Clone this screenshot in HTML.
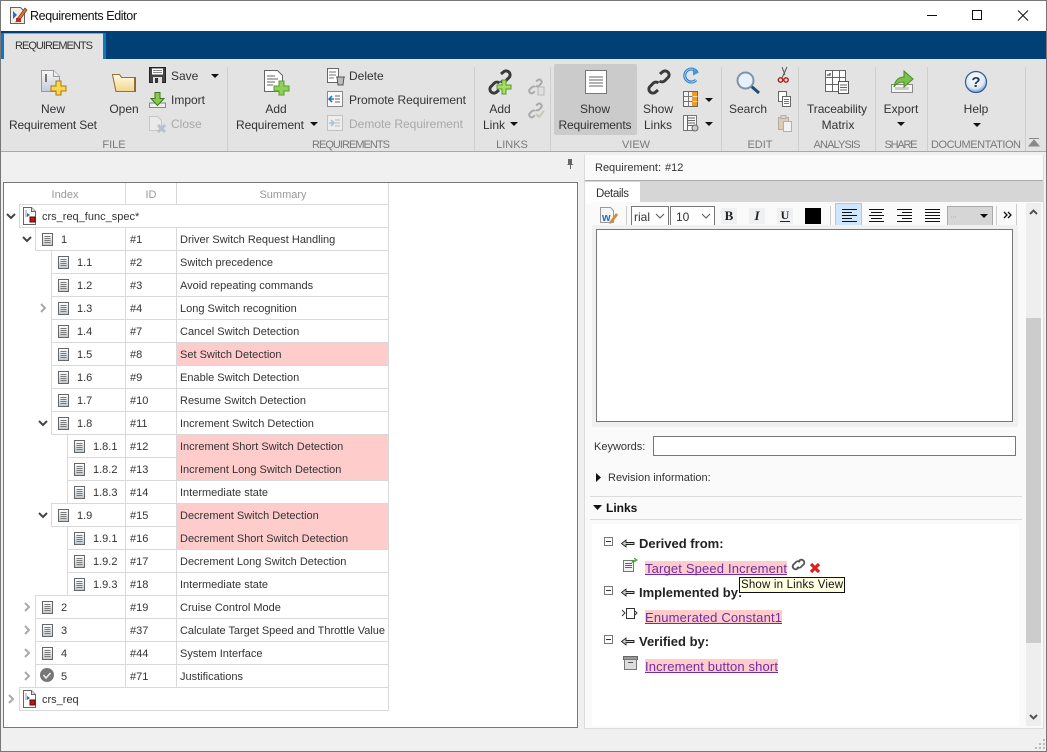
<!DOCTYPE html>
<html><head><meta charset="utf-8"><title>Requirements Editor</title>
<style>
html,body{margin:0;padding:0;width:1047px;height:752px;overflow:hidden;background:#f0f0f0}
svg{display:block}
text{font-family:"Liberation Sans",sans-serif;font-size:11px;fill:#333}
.rb{font-size:12px;fill:#333;text-anchor:middle}
.rl{font-size:12px;fill:#333}
.dis{fill:#a8a8a8}
.sec{font-size:11px;fill:#7a7a7a;text-anchor:middle}
.hd{font-size:11px;fill:#999;text-anchor:middle}
.b{font-size:13px;font-weight:bold;fill:#222}
.lk{font-size:13px;fill:#6f2da8}
.ln{stroke:#d9d9d9;stroke-width:1;fill:none}
.tri{fill:#111}
</style></head><body>
<svg width="1047" height="752" viewBox="0 0 1047 752" xmlns="http://www.w3.org/2000/svg">
<defs>
<linearGradient id="dg" x1="0" y1="0" x2="0" y2="1"><stop offset="0" stop-color="#fff"/><stop offset="1" stop-color="#bcc8d0"/></linearGradient>
<linearGradient id="fg" x1="0" y1="0" x2="0" y2="1"><stop offset="0" stop-color="#fffbe6"/><stop offset="1" stop-color="#f2d58c"/></linearGradient>
<linearGradient id="gg" x1="0" y1="0" x2="0" y2="1"><stop offset="0" stop-color="#f8f8f8"/><stop offset="1" stop-color="#c4ccd8"/></linearGradient>
<radialGradient id="hg" cx=".45" cy=".35" r=".7"><stop offset="0" stop-color="#fff"/><stop offset=".65" stop-color="#dde7f3"/><stop offset="1" stop-color="#5d86b8"/></radialGradient>
<g id="doc"><rect x=".5" y=".5" width="10" height="12" fill="url(#dg)" stroke="#666"/><path d="M2.500 3.500h6M2.500 5.500h6M2.500 7.500h6M2.500 9.500h6" stroke="#7a7a7a"/></g>
<g id="down"><path d="M-4 -2L0 2L4 -2" fill="none" stroke="#444" stroke-width="2"/></g>
<g id="right"><path d="M-2 -4L2 0L-2 4" fill="none" stroke="#aaa" stroke-width="2"/></g>
<g id="root"><path d="M.5.500h8l4 4v13H.5z" fill="#fff" stroke="#666"/><path d="M8.500.5v4h4" fill="#ddd" stroke="#666"/><path d="M3 3v7" stroke="#999"/><path d="M4 6l3 2-3 2z" fill="#1a6fc0"/><rect x="7" y="10" width="5" height="5" fill="#c01818" stroke="#600"/></g>
<g id="chain"><path d="M13 4l3-2.500a4 4 0 0 1 5.500 5.500l-4 4a4 4 0 0 1-5 0" fill="none" stroke="#3a3a3a" stroke-width="3"/><path d="M11 20l-3 2.500a4 4 0 0 1-5.500-5.500l4-4a4 4 0 0 1 5 0" fill="none" stroke="#3a3a3a" stroke-width="3"/></g>
<g id="minus"><rect x=".5" y=".5" width="8" height="8" fill="#fff" stroke="#777"/><path d="M2 4.500h5" stroke="#333"/></g>
<g id="arr"><path d="M13 3.500H5V1L.5 4.500 5 8V5.500H13z" fill="#ccc" stroke="#222" stroke-width=".9"/></g>
</defs>

<!-- window -->
<rect width="1047" height="752" fill="#f0f0f0"/>
<rect x="1" y="1" width="1045" height="30" fill="#fff"/>
<rect x="1" y="31" width="1045" height="28" fill="#004075"/>
<rect x="1" y="59" width="1045" height="92" fill="#e3e3e3"/>
<path d="M1 151.500h1045" stroke="#a9a9a9"/>

<!-- title -->
<g transform="translate(10,7)"><path d="M.5.500h10l4 4v12H.5z" fill="#f3efe6" stroke="#666"/><path d="M3 4l4 4-4 4z" fill="#2a6fb8"/><path d="M15 1L7 12l-1 3 3-1L17 3z" fill="#d8793a" stroke="#7a3010" stroke-width=".7"/><rect x="6" y="11" width="5" height="4" fill="#b83020"/></g>
<text x="30" y="20" style="font-size:12.500px;fill:#111" textLength="107">Requirements Editor</text>
<path d="M927 15.500h10" stroke="#111"/>
<rect x="972.500" y="10.500" width="9" height="9" fill="none" stroke="#111"/>
<path d="M1018 10.500l10 10M1028 10.500l-10 10" stroke="#111"/>

<!-- tab -->
<path d="M1 59V33H106V59z" fill="#0a78c2"/>
<path d="M4 59V33.500H103V59z" fill="#e3e3e3"/>
<text x="15" y="49" style="font-size:11px" textLength="78">REQUIREMENTS</text>

<!-- ribbon separators -->
<g stroke="#cfcfcf"><path d="M227.500 67v84M474.500 67v84M550.500 67v84M721.500 67v84M798.500 67v84M875.500 67v84M927.500 67v84M1025.500 67v84"/></g>
<rect x="554" y="64" width="83" height="71" rx="2" fill="#cbcbcb"/>

<!-- ribbon labels -->
<text class="rb" x="53" y="113">New</text>
<text class="rb" x="53" y="129" textLength="88">Requirement Set</text>
<text class="rb" x="124" y="113">Open</text>
<text class="rl" x="171" y="80">Save</text><path class="tri" d="M211 74h8l-4 4z"/>
<text class="rl" x="171" y="104">Import</text>
<text class="rl dis" x="171" y="128">Close</text>
<text class="rb" x="276" y="113">Add</text>
<text class="rb" x="270" y="129" textLength="68">Requirement</text><path class="tri" d="M310 122h8l-4 4z"/>
<text class="rl" x="349" y="80">Delete</text>
<text class="rl" x="349" y="104" textLength="117">Promote Requirement</text>
<text class="rl dis" x="349" y="128" textLength="114">Demote Requirement</text>
<text class="rb" x="500" y="113">Add</text>
<text class="rb" x="494" y="129">Link</text><path class="tri" d="M510 122h8l-4 4z"/>
<text class="rb" x="595" y="113">Show</text>
<text class="rb" x="595" y="129" textLength="73">Requirements</text>
<text class="rb" x="658" y="113">Show</text>
<text class="rb" x="658" y="129">Links</text>
<path class="tri" d="M705 98h8l-4 4zM705 122h8l-4 4z"/>
<text class="rb" x="748" y="113">Search</text>
<text class="rb" x="837" y="113" textLength="60">Traceability</text>
<text class="rb" x="838" y="129">Matrix</text>
<text class="rb" x="901" y="113">Export</text><path class="tri" d="M897 122h8l-4 4z"/>
<text class="rb" x="976" y="113">Help</text><path class="tri" d="M973 123h8l-4 4z"/>
<text class="sec" x="114" y="148">FILE</text>
<text class="sec" x="351" y="148" textLength="78">REQUIREMENTS</text>
<text class="sec" x="512" y="148">LINKS</text>
<text class="sec" x="636" y="148">VIEW</text>
<text class="sec" x="760" y="148">EDIT</text>
<text class="sec" x="837" y="148" textLength="47">ANALYSIS</text>
<text class="sec" x="901" y="148" textLength="33">SHARE</text>
<text class="sec" x="976" y="148" textLength="90">DOCUMENTATION</text>
<path d="M1029 146h10l-5-6zM1029 138.500h10" fill="#888" stroke="#888"/>

<!-- ribbon icons -->
<g transform="translate(41,70)"><path d="M.5.500h12l6 6v15H.5z" fill="url(#gg)" stroke="#999"/><path d="M12.500.5v6h6" fill="#eee" stroke="#999"/><path d="M5 4v8" stroke="#777" stroke-width="2"/><path d="M15 11h5v5h5v5h-5v4h-5v-4h-5v-5h5z" fill="#fbd64c" stroke="#a87a10"/></g>
<g transform="translate(112,73)"><path d="M.5 1.500h7l2 3h14v14H4z" fill="#c9a264" stroke="#8a6630"/><path d="M.5 1.500h7l2 3h13v14H4z" fill="url(#fg)" stroke="#94713a"/></g>
<g transform="translate(149,67)"><rect x=".5" y=".5" width="16" height="15" fill="#444" stroke="#222"/><rect x="3" y="1.500" width="11" height="6" fill="#fff"/><path d="M4 3.500h9M4 5.500h9" stroke="#888"/><rect x="4" y="10" width="9" height="6" fill="#ddd"/><rect x="6" y="11" width="3" height="5" fill="#333"/></g>
<g transform="translate(149,92)"><path d="M.5 15.500V11h16v4.500z" fill="#eee" stroke="#888"/><path d="M6 .5h5v6h4l-6.500 7L2 6.500h4z" fill="#8fc850" stroke="#3a7a20"/></g>
<g transform="translate(149,116)" opacity=".5"><path d="M.5.500h8l4 4v10H.5z" fill="#f2f2f2" stroke="#aaa"/><path d="M9 9l7 7M16 9l-7 7" stroke="#8aa0b8" stroke-width="3"/></g>
<g transform="translate(264,70)"><path d="M.5.500h13l5 5v16H.5z" fill="#fff" stroke="#666"/><path d="M3 6h8M3 9h11M3 12h8M3 15h6" stroke="#666"/><path d="M15 11h5v5h5v5h-5v4h-5v-4h-5v-5h5z" fill="#8fd05a" stroke="#5a9a30"/></g>
<g transform="translate(327,68)"><rect x=".5" y=".5" width="11" height="14" fill="#fff" stroke="#666"/><path d="M2 4h7M2 7h7M2 10h5" stroke="#777"/><path d="M9 9h9M10 9l1 8h5l1-8" fill="#bbb" stroke="#555"/></g>
<g transform="translate(327,91)"><rect x=".5" y=".5" width="15" height="15" fill="#fafafa" stroke="#888"/><path d="M8 5h5M8 8h5M8 11h5" stroke="#666"/><path d="M7 8H2M5 5L2 8l3 3" fill="none" stroke="#1f6fc0" stroke-width="1.500"/></g>
<g transform="translate(327,115)" opacity=".45"><rect x=".5" y=".5" width="15" height="15" fill="#fafafa" stroke="#999"/><path d="M8 5h5M8 8h5M8 11h5" stroke="#888"/><path d="M2 8h5M4 5l3 3-3 3" fill="none" stroke="#5a9ad0" stroke-width="1.500"/></g>
<use href="#chain" transform="translate(488,70)"/>
<path d="M504 79h4v5h5v4h-5v5h-4v-5h-5v-4h5z" fill="#a6dc62" stroke="#5a9a30" transform="translate(-2,1)"/>
<g opacity=".35"><use href="#chain" transform="translate(528,79) scale(.62)"/><rect x="538" y="87" width="6" height="8" fill="#ddd" stroke="#666"/></g>
<g opacity=".35"><use href="#chain" transform="translate(528,103) scale(.62)"/><path d="M536 114l3 3 5-6" fill="none" stroke="#8a9a60" stroke-width="2"/></g>
<g transform="translate(585,70)"><rect x=".5" y=".5" width="21" height="23" fill="#fff" stroke="#777"/><path d="M4 7h14M4 10h14M4 13h14M4 16h14" stroke="#666"/></g>
<use href="#chain" transform="translate(647,70)"/>
<g transform="translate(683,68)"><path d="M14 4.500A6.500 6.500 0 1 0 13 12" fill="none" stroke="#2b7cc8" stroke-width="3"/><path d="M14 4.500A6.500 6.500 0 1 0 13 12" fill="none" stroke="#9fd0f2" stroke-width="1"/><path d="M10 1l6 3.500-6 3z" fill="#3f96dc"/></g>
<g transform="translate(683,91)"><rect x=".5" y=".5" width="14" height="15" fill="#f4f4f4" stroke="#666"/><rect x="9" y="1" width="5" height="14" fill="#f09a28"/><path d="M.5 5.500h14M.5 10.500h14M5.500.5v15" stroke="#777"/><path d="M9.500 5.500h5M9.500 10.500h5" stroke="#ffe0b0"/></g>
<g transform="translate(683,115)"><rect x=".5" y=".5" width="13" height="15" fill="#f8f8f8" stroke="#777"/><path d="M5 3h7M5 5.500h7M5 8h7M5 10.500h6M4.500.5v15" stroke="#666"/><circle cx="12" cy="13" r="3" fill="#ccc" stroke="#666"/></g>
<g transform="translate(736,71)"><path d="M15 15l8 7" stroke="#234a78" stroke-width="3"/><circle cx="9.500" cy="9.500" r="8" fill="#e6f1fa" stroke="#7e95a8" stroke-width="2"/></g>
<g transform="translate(778,67)"><path d="M9 0L4 11M4 0l3 8" stroke="#555" fill="none"/><circle cx="2.500" cy="13" r="2.200" fill="none" stroke="#b01818" stroke-width="1.400"/><circle cx="8" cy="13" r="2.200" fill="none" stroke="#b01818" stroke-width="1.400"/></g>
<g transform="translate(778,91)"><rect x=".5" y=".5" width="8" height="10" fill="#fff" stroke="#666"/><rect x="4.500" y="5.500" width="8" height="10" fill="#fff" stroke="#666"/><path d="M6 8.500h5M6 10.500h5M6 12.500h5" stroke="#777"/></g>
<g transform="translate(778,115)" opacity=".55"><rect x=".5" y="2.500" width="10" height="12" fill="#d8b890" stroke="#9a8266"/><rect x="3" y=".5" width="5" height="3" fill="#ccc" stroke="#888"/><rect x="5.500" y="6.500" width="8" height="10" fill="#fff" stroke="#888"/></g>
<g transform="translate(825,70)"><rect x=".5" y=".5" width="20" height="21" fill="#fff" stroke="#666"/><path d="M7.500.5v21M14.500.5v21M.5 7.500h20M.5 14.500h20" stroke="#666"/><path d="M5 3v2H2" fill="none" stroke="#222"/><rect x="13.500" y="11.500" width="10" height="12" fill="#fff" stroke="#555"/><path d="M15 15h7M15 17.500h7M15 20h7" stroke="#666"/></g>
<g transform="translate(889,70)"><path d="M2.500 14.500h21v8h-21z" fill="#f4f4f4" stroke="#888"/><rect x="6" y="17" width="14" height="3" fill="#ccc"/><path d="M5 17C6 10 10 7 15 7V1l9 8-9 8v-5c-4 0-8 1-10 5z" fill="#7cc24a" stroke="#4a8a28"/></g>
<g transform="translate(965,71)"><circle cx="11" cy="11" r="10.500" fill="url(#hg)" stroke="#2c5a94" stroke-width="1.200"/><text x="11" y="16" style="font-size:15px;font-weight:bold;fill:#1b3a68;text-anchor:middle">?</text></g>

<!-- left panel -->
<rect x="3.500" y="182.500" width="574" height="545" fill="#fff" stroke="#777"/>
<path d="M568 160h4v5l2 1h-3v4h-1v-4h-3l1-1z" fill="#666" transform="translate(0,-1)"/>

<!-- table: pink cells -->
<g fill="#ffcccc"><rect x="177" y="343" width="211" height="22"/><rect x="177" y="435" width="211" height="45"/><rect x="177" y="504" width="211" height="45"/></g>

<!-- table lines -->
<path class="ln" d="M19 204.500H388.500M19 227.500H388.500M35 250.500H388.500M51 273.500H388.500M51 296.500H388.500M51 319.500H388.500M51 342.500H388.500M51 365.500H388.500M51 388.500H388.500M51 411.500H388.500M51 434.500H388.500M67 457.500H177M67 480.500H388.500M51 503.500H388.500M51 526.500H177M67 549.500H388.500M67 572.500H388.500M35 595.500H388.500M35 618.500H388.500M35 641.500H388.500M35 664.500H388.500M19 687.500H388.500M19 710.500H388.500"/>
<path class="ln" d="M125.500 183V204M176.500 183V204M388.500 183V710.500M19.500 204.500V227.500M19.500 687.500V710.500M35.500 227.500V250.500M35.500 595.500V687.500M51.500 250.500V434.500M51.500 503.500V526.500M67.500 434.500V503.500M67.500 526.500V595.500M125.500 227.500V687.500M176.500 227.500V687.500"/>

<text class="hd" x="65" y="198">Index</text><text class="hd" x="151" y="198">ID</text><text class="hd" x="283" y="198">Summary</text>

<use href="#down" x="11" y="216"/><use href="#root" x="23" y="207"/><text x="42" y="220">crs_req_func_spec*</text>

<use href="#down" x="27" y="239"/><use href="#doc" x="42" y="233"/><text x="61" y="243">1</text><text x="130" y="243">#1</text><text x="180" y="243">Driver Switch Request Handling</text>
<use href="#doc" x="58" y="256"/><text x="77" y="266">1.1</text><text x="130" y="266">#2</text><text x="180" y="266">Switch precedence</text>
<use href="#doc" x="58" y="279"/><text x="77" y="289">1.2</text><text x="130" y="289">#3</text><text x="180" y="289">Avoid repeating commands</text>
<use href="#right" x="43" y="308"/><use href="#doc" x="58" y="302"/><text x="77" y="312">1.3</text><text x="130" y="312">#4</text><text x="180" y="312">Long Switch recognition</text>
<use href="#doc" x="58" y="325"/><text x="77" y="335">1.4</text><text x="130" y="335">#7</text><text x="180" y="335">Cancel Switch Detection</text>
<use href="#doc" x="58" y="348"/><text x="77" y="358">1.5</text><text x="130" y="358">#8</text><text x="180" y="358">Set Switch Detection</text>
<use href="#doc" x="58" y="371"/><text x="77" y="381">1.6</text><text x="130" y="381">#9</text><text x="180" y="381">Enable Switch Detection</text>
<use href="#doc" x="58" y="394"/><text x="77" y="404">1.7</text><text x="130" y="404">#10</text><text x="180" y="404">Resume Switch Detection</text>
<use href="#down" x="43" y="423"/><use href="#doc" x="58" y="417"/><text x="77" y="427">1.8</text><text x="130" y="427">#11</text><text x="180" y="427">Increment Switch Detection</text>
<use href="#doc" x="74" y="440"/><text x="93" y="450">1.8.1</text><text x="130" y="450">#12</text><text x="180" y="450">Increment Short Switch Detection</text>
<use href="#doc" x="74" y="463"/><text x="93" y="473">1.8.2</text><text x="130" y="473">#13</text><text x="180" y="473">Increment Long Switch Detection</text>
<use href="#doc" x="74" y="486"/><text x="93" y="496">1.8.3</text><text x="130" y="496">#14</text><text x="180" y="496">Intermediate state</text>
<use href="#down" x="43" y="515"/><use href="#doc" x="58" y="509"/><text x="77" y="519">1.9</text><text x="130" y="519">#15</text><text x="180" y="519">Decrement Switch Detection</text>
<use href="#doc" x="74" y="532"/><text x="93" y="542">1.9.1</text><text x="130" y="542">#16</text><text x="180" y="542">Decrement Short Switch Detection</text>
<use href="#doc" x="74" y="555"/><text x="93" y="565">1.9.2</text><text x="130" y="565">#17</text><text x="180" y="565">Decrement Long Switch Detection</text>
<use href="#doc" x="74" y="578"/><text x="93" y="588">1.9.3</text><text x="130" y="588">#18</text><text x="180" y="588">Intermediate state</text>
<use href="#right" x="27" y="607"/><use href="#doc" x="42" y="601"/><text x="61" y="611">2</text><text x="130" y="611">#19</text><text x="180" y="611">Cruise Control Mode</text>
<use href="#right" x="27" y="630"/><use href="#doc" x="42" y="624"/><text x="61" y="634">3</text><text x="130" y="634">#37</text><text x="180" y="634" textLength="205">Calculate Target Speed and Throttle Value</text>
<use href="#right" x="27" y="653"/><use href="#doc" x="42" y="647"/><text x="61" y="657">4</text><text x="130" y="657">#44</text><text x="180" y="657">System Interface</text>
<use href="#right" x="27" y="676"/><circle cx="47" cy="675" r="7" fill="#777"/><path d="M43.500 675l2.500 3 4.500-5" fill="none" stroke="#eee" stroke-width="1.600"/><text x="61" y="680">5</text><text x="130" y="680">#71</text><text x="180" y="680">Justifications</text>
<use href="#right" x="11" y="699"/><use href="#root" x="23" y="690"/><text x="42" y="703">crs_req</text>

<!-- right panel -->
<rect x="584" y="155" width="459" height="573" fill="#fafafa"/>
<path d="M584.500 155v573M1043.500 155v573M584 728.500h460" stroke="#dcdcdc"/>
<path d="M585 180.500h458" stroke="#aaa"/>
<rect x="585" y="181" width="458" height="21" fill="#d6d6d6"/>
<rect x="585" y="182" width="55" height="22" fill="#fff"/>
<text x="595" y="171" style="font-size:11px" textLength="66">Requirement:</text>
<text x="665" y="171" style="font-size:11px">#12</text>
<text x="596" y="197" style="font-size:11.500px" textLength="33">Details</text>
<rect x="591" y="202" width="431" height="27" fill="#fafafa"/>

<!-- editor toolbar -->
<g transform="translate(600,207)"><path d="M.5.500h10l3 3v12H.5z" fill="#f6f6f6" stroke="#999"/><text x="2" y="14" style="font-size:11px;font-weight:bold;fill:#1a6fc0">w</text><path d="M16 6l-6 8-1 3 3-1 6-8z" fill="#d88a3a"/></g>
<path d="M626.500 206v20M830.500 206v20M996.500 206v20M1016.500 204v24" stroke="#ccc"/>
<rect x="631.500" y="206.500" width="37" height="19" fill="#fff" stroke="#777"/>
<rect x="670.500" y="206.500" width="44" height="19" fill="#fff" stroke="#777"/>
<text x="634" y="221" style="font-size:12px">rial</text>
<text x="676" y="221" style="font-size:12px">10</text>
<path d="M656 214l4 4 4-4M702 214l4 4 4-4" fill="none" stroke="#555"/>
<rect x="721" y="208" width="16" height="16" fill="#eef0f2"/><rect x="749" y="208" width="16" height="16" fill="#eef0f2"/><rect x="777" y="208" width="16" height="16" fill="#eef0f2"/>
<text x="729" y="220" style="font-family:'Liberation Serif',serif;font-size:13px;font-weight:bold;fill:#222;text-anchor:middle">B</text>
<text x="757" y="220" style="font-family:'Liberation Serif',serif;font-size:13px;font-style:italic;font-weight:bold;fill:#222;text-anchor:middle">I</text>
<text x="785" y="219" style="font-family:'Liberation Serif',serif;font-size:12px;font-weight:bold;fill:#222;text-anchor:middle">U</text><path d="M780 221.500h10" stroke="#222"/>
<rect x="805" y="208" width="16" height="16" fill="#000"/>
<rect x="835.500" y="203.500" width="26" height="24" fill="#cfe6fb" stroke="#99cdf5"/>
<g stroke="#111"><path d="M842 209.500h15M842 212.500h10M842 215.500h15M842 218.500h10M842 221.500h15"/><path d="M869 209.500h15M871 212.500h11M869 215.500h15M871 218.500h11M869 221.500h15"/><path d="M897 209.500h15M902 212.500h10M897 215.500h15M902 218.500h10M897 221.500h15"/><path d="M925 209.500h15M925 212.500h15M925 215.500h15M925 218.500h15M925 221.500h15"/></g>
<rect x="947.500" y="206.500" width="45" height="19" fill="#d6d6d6" stroke="#aaa"/><path d="M951 217h6" stroke="#e0a0a0" stroke-dasharray="1 1"/><path class="tri" d="M980 214h8l-4 4z"/>
<path d="M1004 212l3 3-3 3M1008 212l3 3-3 3" fill="none" stroke="#111" stroke-width="1.300"/>

<!-- editor -->
<rect x="592" y="225" width="426" height="202" fill="#f0f0f0"/>
<rect x="596.500" y="229.500" width="416" height="192" fill="#fff" stroke="#777"/>
<text x="594" y="450">Keywords:</text>
<rect x="653.500" y="436.500" width="362" height="19" fill="#fff" stroke="#777"/>
<path class="tri" d="M596 473l5 4.500-5 4.500z"/>
<text x="608" y="481">Revision information:</text>
<path d="M590 496.500h432M590 519.500h432" stroke="#dcdcdc"/>
<path class="tri" d="M593 505h9l-4.500 5z"/>
<text x="606" y="512" style="font-size:12px;font-weight:bold;fill:#111">Links</text>
<rect x="592" y="524" width="427" height="202" fill="#fff"/>

<!-- scrollbar -->
<rect x="1026" y="203" width="15" height="523" fill="#eeeeee"/>
<rect x="1026" y="318" width="15" height="325" fill="#cccccc"/>
<path d="M1030 214l3.500-3.500 3.500 3.500M1030 715l3.500 3.500 3.500-3.500" fill="none" stroke="#555" stroke-width="2"/>

<!-- links -->
<use href="#minus" x="604" y="537"/><use href="#arr" x="621" y="539"/><text class="b" x="639" y="548">Derived from:</text>
<g transform="translate(623,558)"><rect x=".5" y="2.500" width="10" height="11" fill="#f2f2f2" stroke="#777"/><path d="M2 5.500h7M2 7.500h7M2 9.500h7" stroke="#666"/><path d="M9 5c0-2 2-3 4-3M11 0l3 2-3 2" fill="none" stroke="#3a9a30"/></g>
<rect x="645" y="561" width="142" height="14" fill="#ffcccc"/>
<text class="lk" x="645" y="573" textLength="142">Target Speed Increment</text><path d="M645 574.500h142" stroke="#6f2da8"/>
<g transform="translate(791,558)"><path d="M7 4l2-2a3 3 0 0 1 4 4l-3 3a3 3 0 0 1-4 0M8 9l-2 2a3 3 0 0 1-4-4l3-3a3 3 0 0 1 4 0" fill="none" stroke="#555" stroke-width="1.800"/></g>
<path d="M811 564l8 8M819 564l-8 8" stroke="#e02020" stroke-width="3.200"/>

<use href="#minus" x="604" y="586"/><use href="#arr" x="621" y="588"/><text class="b" x="639" y="597">Implemented by:</text>
<g transform="translate(622,608)"><rect x="4.500" y=".5" width="8" height="10" fill="#fff" stroke="#333"/><path d="M0 2l3 3-3 3M13 3l2 2-2 2" fill="none" stroke="#333"/></g>
<rect x="645" y="610" width="137" height="14" fill="#ffcccc"/>
<text class="lk" x="645" y="622" textLength="137">Enumerated Constant1</text><path d="M645 623.500h137" stroke="#6f2da8"/>

<use href="#minus" x="604" y="635"/><use href="#arr" x="621" y="637"/><text class="b" x="639" y="646">Verified by:</text>
<g transform="translate(623,656)"><rect x=".5" y=".5" width="14" height="3" fill="#999" stroke="#666"/><rect x="1.500" y="3.500" width="12" height="10" fill="#ddd" stroke="#777"/><path d="M5 6.500h5" stroke="#555"/></g>
<rect x="645" y="659" width="133" height="14" fill="#ffcccc"/>
<text class="lk" x="645" y="671" textLength="133">Increment button short</text><path d="M645 672.500h133" stroke="#6f2da8"/>

<!-- tooltip -->
<rect x="739.500" y="577.500" width="105" height="15" fill="#ffffe1" stroke="#111"/>
<text x="741" y="588" style="font-size:11.500px;fill:#111" textLength="102">Show in Links View</text>

<!-- status grip -->
<path d="M1043 749h2v-2h-2zM1039 749h2v-2h-2zM1043 745h2v-2h-2zM1035 749h2v-2h-2zM1039 745h2v-2h-2zM1043 741h2v-2h-2z" fill="#bbb"/>

<!-- window border -->
<rect x=".5" y=".5" width="1046" height="751" fill="none" stroke="#777"/>
</svg>
</body></html>
